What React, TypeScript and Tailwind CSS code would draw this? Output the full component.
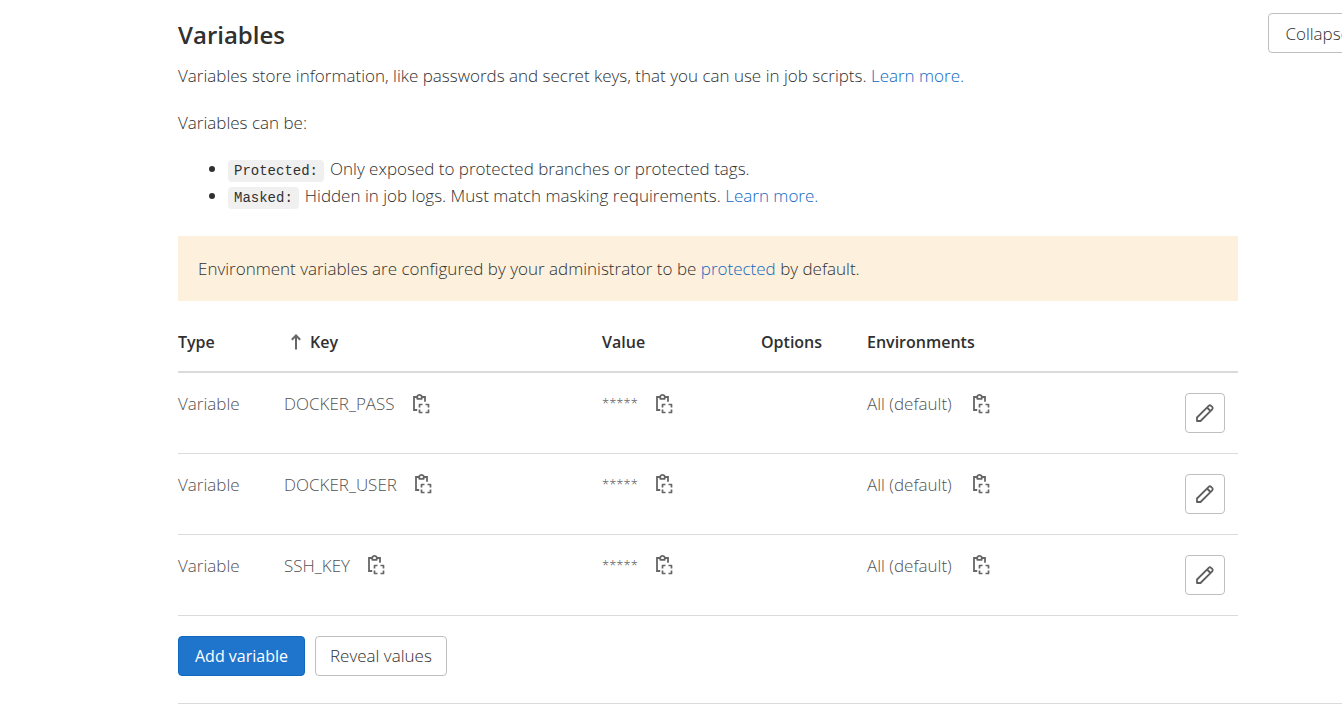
import React from "react";

const rows = ["DOCKER_PASS", "DOCKER_USER", "SSH_KEY"];

function CopyButton({ label }: { label: string }) {
  return (
    <button type="button" aria-label={label} className="inline-flex shrink-0 text-[#666666]">
      <svg viewBox="0 0 20 20" className="size-5" fill="none" stroke="currentColor" strokeWidth="1.8">
        <path d="M6.300 3H3v13h3.200M11 3h3v4.800" />
        <path d="M6.300 2.600v2.200h4.400V2.600a2.200 1.700 0 0 0-4.400 0Z" strokeLinejoin="round" />
        <path d="M8.500 13.500v-3h3M14.500 10.500h3v3M17.500 15.500v3h-3M11.500 18.500h-3v-3" strokeWidth="1.700" strokeLinejoin="round" />
      </svg>
    </button>
  );
}

function EditButton({ label }: { label: string }) {
  return (
    <button
      type="button"
      aria-label={label}
      className="inline-flex size-10 items-center justify-center rounded border border-[#bfbfbf] bg-white text-[#5e5e5e]"
    >
      <svg viewBox="0 0 20 20" className="size-5" fill="none" stroke="currentColor" strokeWidth="1.8" strokeLinejoin="round">
        <path d="M2 18v-3.500L13.700 2.800a1.700 1.700 0 0 1 2.400 0l1.100 1.100a1.700 1.700 0 0 1 0 2.400L5.500 18ZM12 4.500l3.500 3.500" />
      </svg>
    </button>
  );
}

export default function App() {
  return (
    <main className="overflow-hidden bg-white pl-[178px] font-['Open_Sans','Noto_Sans',sans-serif] text-[17px] leading-[27px] font-[350] text-[#303030]">
      <section className="border-b border-[#dbdbdb] pt-[13px] pb-[27px]">
        <header className="flex items-start justify-between">
          <div>
            <h2 className="pt-2 text-2xl leading-[28px] font-semibold">Variables</h2>
            <p className="mt-[13px]">
              Variables store information, like passwords and secret keys, that you can use in job scripts.{" "}
              <a href="#variables" className="text-[#1068bf]">Learn more.</a>
            </p>
          </div>
          <button type="button" className="-mr-[25px] h-10 shrink-0 rounded border border-[#bfbfbf] bg-white px-4">
            Collapse
          </button>
        </header>
        <div className="mr-[104px]">
          <p className="mt-5">Variables can be:</p>
          <ul className="mt-[19px] list-disc pl-[50px]">
            <li>
              <code className="mr-1.5 rounded bg-[#f0f0f0] px-1.5 py-[3px] font-['Liberation_Mono',monospace] text-sm font-normal">Protected:</code>
              Only exposed to protected branches or protected tags.
            </li>
            <li>
              <code className="mr-1.5 rounded bg-[#f0f0f0] px-1.5 py-[3px] font-['Liberation_Mono',monospace] text-sm font-normal">Masked:</code>
              Hidden in job logs. Must match masking requirements.{" "}
              <a href="#masking" className="text-[#1068bf]">Learn more.</a>
            </li>
          </ul>
          <p className="mt-[27px] bg-[#fdf0dd] px-5 py-[19px]">
            Environment variables are configured by your administrator to be{" "}
            <a href="#protected" className="text-[#1068bf]">protected</a> by default.
          </p>
          <table className="w-full table-fixed text-left text-[#525252]">
            <colgroup>
              <col className="w-[10%]" />
              <col className="w-[30%]" />
              <col className="w-[15%]" />
              <col className="w-[10%]" />
              <col className="w-[25%]" />
              <col className="w-[10%]" />
            </colgroup>
            <thead>
              <tr className="h-[71px] border-b-2 border-[#dbdbdb] text-base leading-[27px] text-[#303030] *:pt-3 *:font-semibold">
                <th>Type</th>
                <th aria-sort="ascending">
                  <span className="flex items-center gap-1">
                    <svg viewBox="0 0 20 20" className="ml-0.5 size-5" fill="none" stroke="#666666" strokeWidth="2">
                      <path d="M10 17.500V4M5.800 7.700 10 3.500l4.200 4.200" />
                    </svg>
                    Key
                  </span>
                </th>
                <th>Value</th>
                <th>Options</th>
                <th>Environments</th>
                <th aria-label="Actions" />
              </tr>
            </thead>
            <tbody>
              {rows.map((key) => (
                <tr key={key} className="h-[81px] border-b border-[#dbdbdb] align-top *:pt-[17px]">
                  <td>Variable</td>
                  <td>
                    <div className="flex items-center gap-4">{key}<CopyButton label="Copy key" /></div>
                  </td>
                  <td>
                    <div className="flex items-center gap-4">
                      <span className="text-[13px]">*****</span>
                      <CopyButton label="Copy value" />
                    </div>
                  </td>
                  <td />
                  <td>
                    <div className="flex items-center gap-[19px]">All (default)<CopyButton label="Copy environment" /></div>
                  </td>
                  <td>
                    <div className="flex justify-end pt-[3px] pr-[13px]"><EditButton label={`Edit ${key}`} /></div>
                  </td>
                </tr>
              ))}
            </tbody>
          </table>
          <div className="mt-5 flex gap-[10px]">
            <button type="button" className="h-10 rounded border border-[#1068bf] bg-[#1f75cb] px-4 text-base font-normal text-white">
              Add variable
            </button>
            <button type="button" className="h-10 rounded border border-[#bfbfbf] bg-white px-[14px]">
              Reveal values
            </button>
          </div>
        </div>
      </section>
    </main>
  );
}
